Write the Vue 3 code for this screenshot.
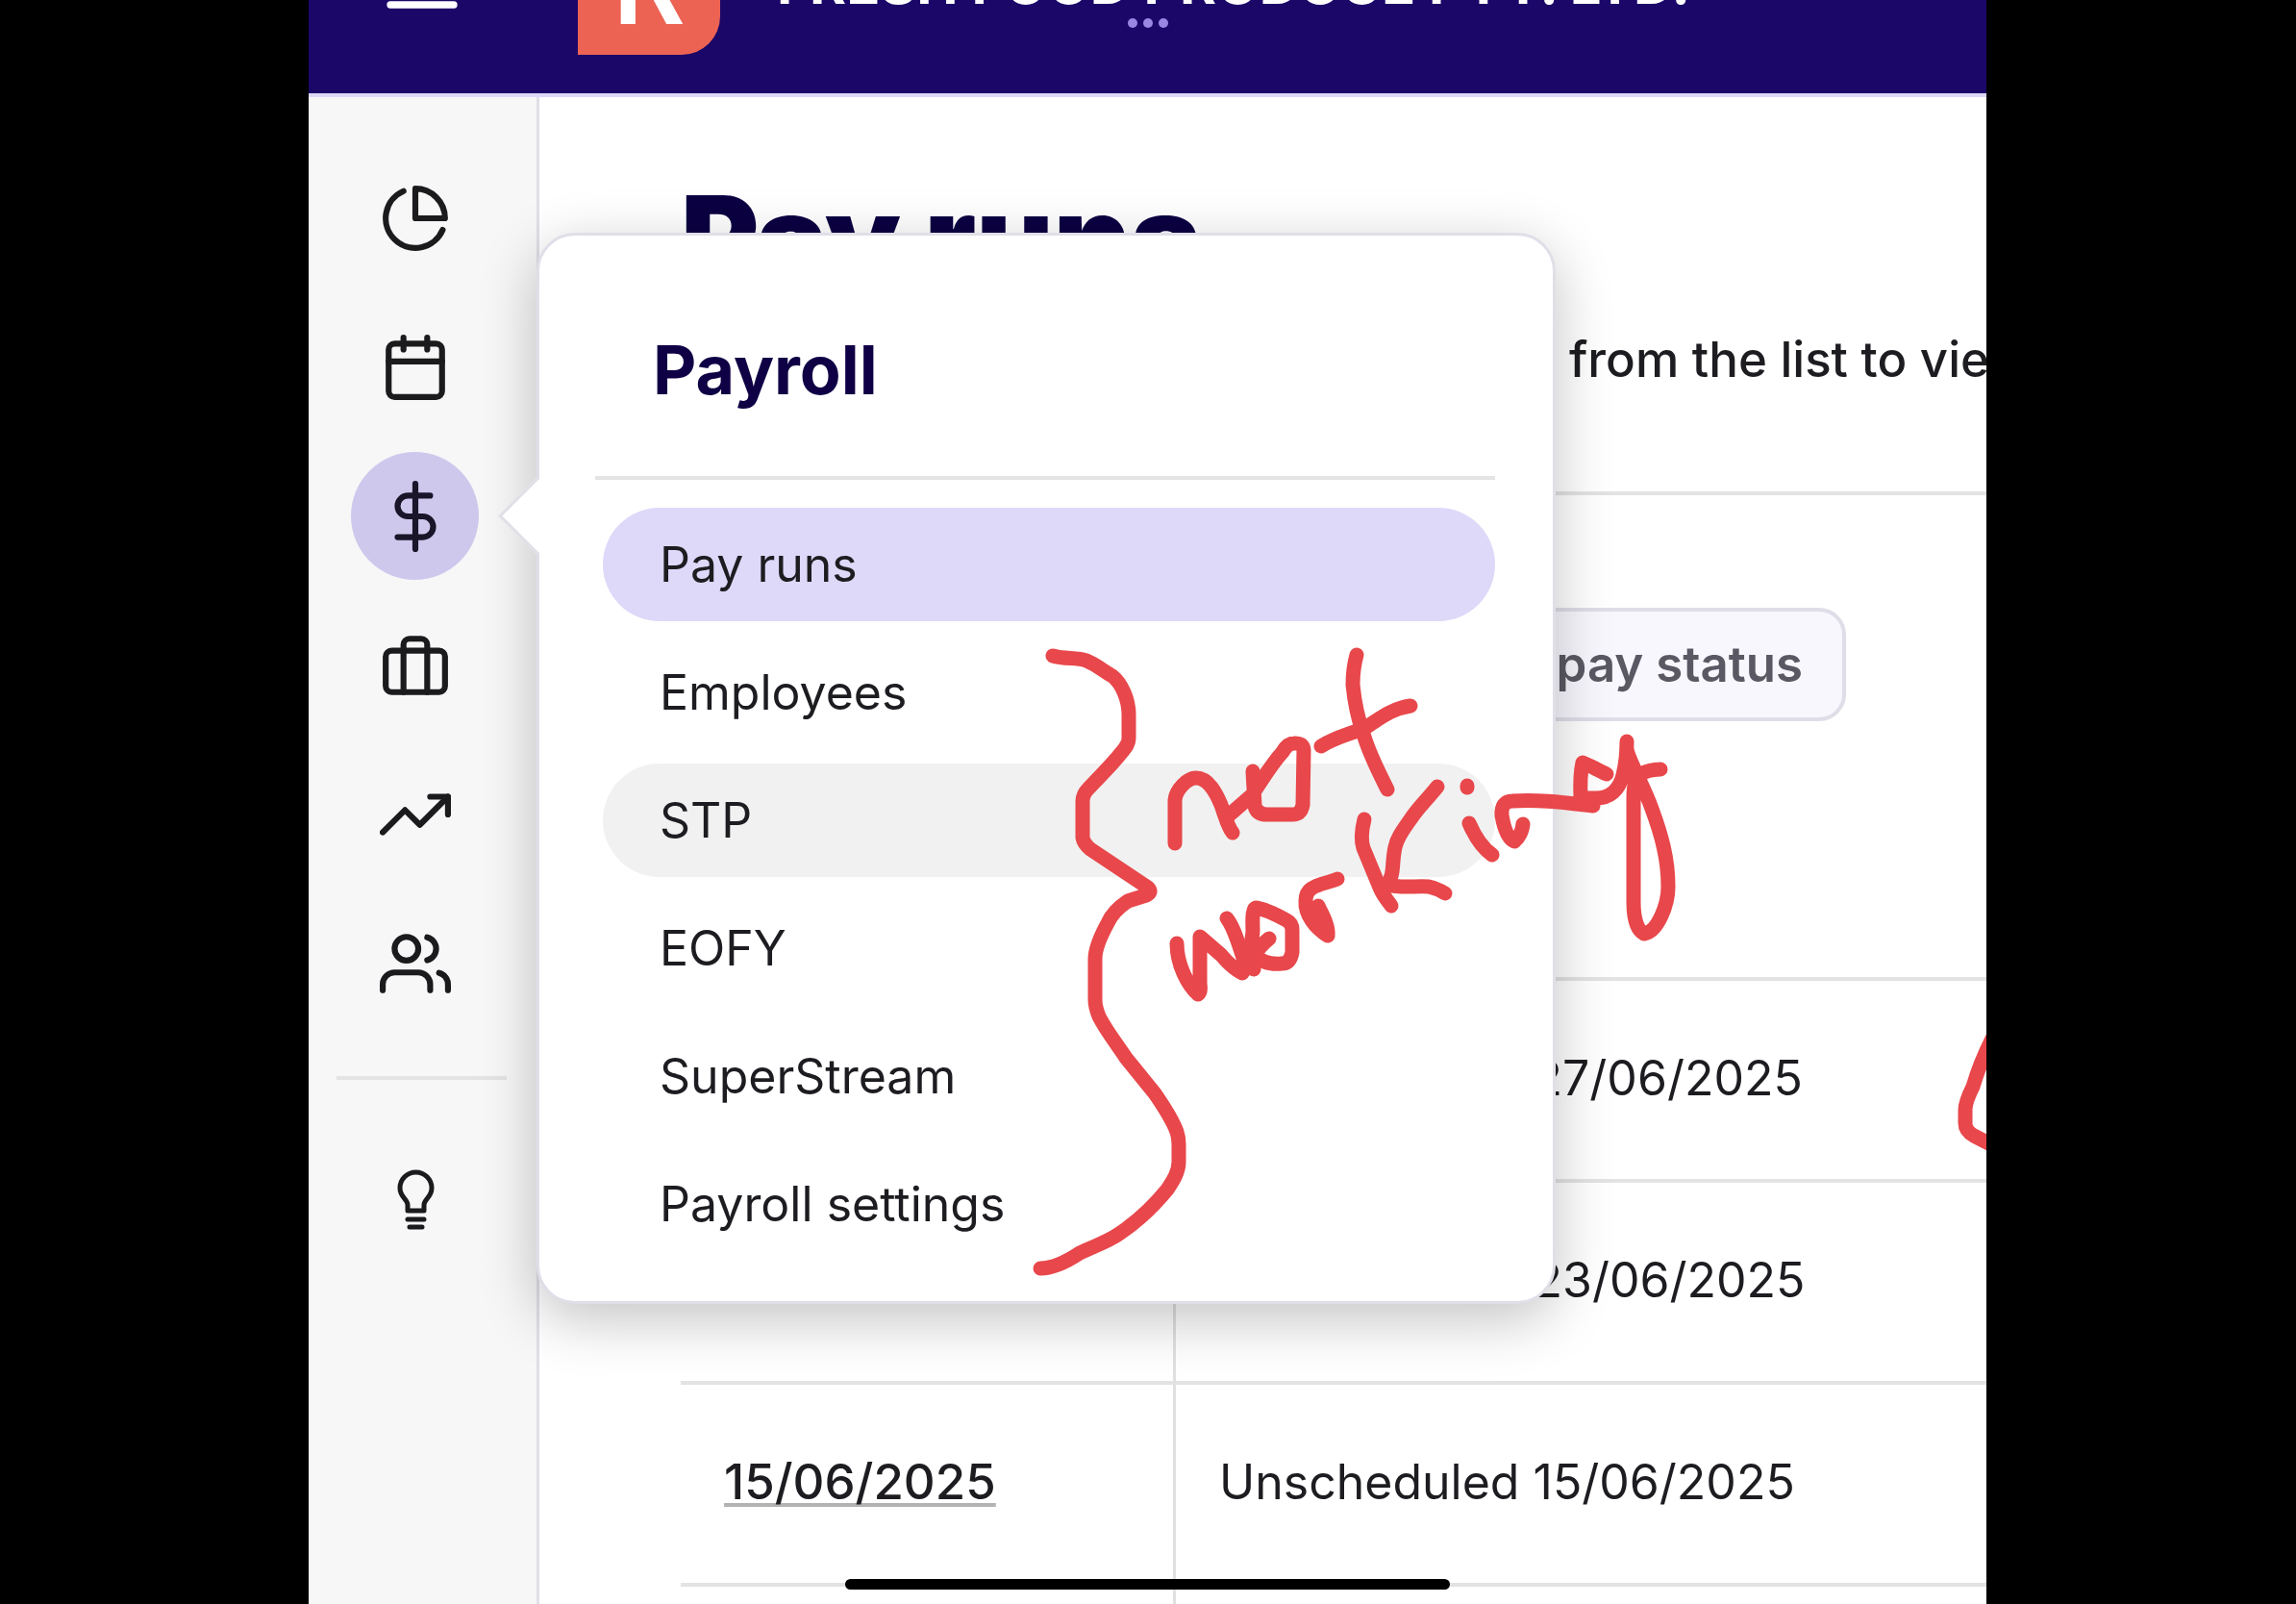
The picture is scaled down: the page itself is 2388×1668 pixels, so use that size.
<script setup>
import { ref } from 'vue'

const navItems = [
  { id: 'dashboard', label: 'Dashboard', paths: ['M21.21 15.89A10 10 0 1 1 8 2.83', 'M22 12A10 10 0 0 0 12 2v10z'] },
  { id: 'calendar', label: 'Calendar', paths: ['M5 4h14a2 2 0 0 1 2 2v14a2 2 0 0 1-2 2H5a2 2 0 0 1-2-2V6a2 2 0 0 1 2-2z', 'M16 2v4', 'M8 2v4', 'M3 10h18'] },
  { id: 'payroll', label: 'Payroll', paths: ['M12 1v22', 'M17 5H9.5a3.5 3.5 0 0 0 0 7h5a3.5 3.5 0 0 1 0 7H6'] },
  { id: 'business', label: 'Business', paths: ['M4 7h16a2 2 0 0 1 2 2v10a2 2 0 0 1-2 2H4a2 2 0 0 1-2-2V9a2 2 0 0 1 2-2z', 'M16 21V5a2 2 0 0 0-2-2h-4a2 2 0 0 0-2 2v16'] },
  { id: 'reports', label: 'Reports', paths: ['M23 6l-9.5 9.5-5-5L1 18', 'M17 6h6v6'] },
  { id: 'contacts', label: 'Contacts', paths: ['M17 21v-2a4 4 0 0 0-4-4H5a4 4 0 0 0-4 4v2', 'M9 3a4 4 0 1 1 0 8a4 4 0 1 1 0-8z', 'M23 21v-2a4 4 0 0 0-3-3.87', 'M16 3.13a4 4 0 0 1 0 7.75'] },
]
const activeNav = ref('payroll')

const menu = ['Pay runs', 'Employees', 'STP', 'EOFY', 'SuperStream', 'Payroll settings']
const current = ref('Pay runs')
const hovered = ref('STP')

const payRuns = [
  { id: 1, date: '', name: 'Unscheduled 27/06/2025' },
  { id: 2, date: '', name: 'Unscheduled 23/06/2025' },
  { id: 3, date: '15/06/2025', name: 'Unscheduled 15/06/2025' },
  { id: 4, date: '', name: '' },
]

// pen strokes, in page coordinates
const strokes = [
  // brace
  'M1095 682C1108 686 1120 683 1130 687C1140 691 1148 698 1157 703C1167 711 1174 728 1174 743V768C1174 774 1170 778 1166 783C1155 797 1142 809 1132 820Q1126 826 1126 833V871Q1127 877 1134 883L1194 923Q1199 928 1192 931L1173 937C1164 943 1156 951 1152 960C1146 971 1139 985 1139 997V1040C1139 1047 1141 1052 1143 1057C1150 1071 1161 1085 1171 1100L1201 1137C1210 1150 1219 1163 1224 1177Q1226 1183 1226 1190V1208C1226 1219 1220 1228 1214 1237C1200 1254 1182 1271 1164 1283C1151 1292 1137 1296 1123 1303C1111 1311 1096 1319 1082 1319',
  // not
  'M1222 877V832C1223 821 1235 809 1244 809C1257 809 1265 825 1270 837C1274 848 1276 858 1282 866',
  'M1279 847L1302 827C1313 811 1322 795 1334 782Q1339 773 1346 773Q1355 772 1356 780L1355 837Q1353 847 1344 847H1318Q1307 847 1305 838L1303 802',
  'M1411 681C1408 692 1407 701 1407 712C1409 732 1414 752 1418 763C1424 784 1434 803 1443 821',
  'M1374 776C1389 766 1407 763 1421 756C1433 749 1446 737 1467 734',
  // working
  'M1224 981C1224 1003 1235 1024 1246 1034C1250 1031 1248 1026 1248 1022V974L1270 993Q1281 1006 1292 1012Q1297 1006 1292 993C1287 978 1283 964 1276 955',
  'M1304 1008C1296 992 1303 979 1303 967Q1302 945 1306 944C1315 945 1329 952 1338 957Q1344 960 1344 967V990Q1342 1002 1333 1002C1321 1003 1311 1000 1305 993Q1311 983 1320 976',
  'M1391 914C1382 918 1371 919 1364 924Q1358 928 1358 937C1357 951 1368 965 1381 973C1382 962 1375 951 1371 942',
  'M1419 852C1416 864 1415 873 1418 882L1435 923C1439 933 1444 937 1447 942',
  'M1495 818C1482 834 1475 840 1467 852C1460 862 1453 871 1451 881C1447 899 1451 910 1442 920C1457 924 1472 921 1486 922Q1495 924 1503 929',
  'M1526 817V819',
  'M1528 856C1534 870 1542 882 1552 889',
  'M1584 857Q1583 868 1575 875Q1566 871 1562 848Q1561 833 1573 833C1600 831 1630 835 1657 838',
  'M1671 805C1662 801 1654 796 1646 793Q1643 806 1644 830H1660C1674 830 1684 822 1688 806Q1692 790 1692 771',
  'M1727 800Q1705 801 1701 812Q1699 819 1699 830V938C1699 953 1702 967 1710 971C1724 969 1735 941 1735 922C1735 893 1728 868 1718 841C1710 818 1697 797 1692 780',
  // loop running off the right edge
  'M2072 1080C2063 1098 2057 1113 2052 1130Q2044 1146 2044 1154V1168Q2044 1176 2053 1181L2076 1193',
]
</script>

<template>
  <div class="device">
    <div class="screen">
      <header class="topbar">
        <button class="menu-btn" aria-label="Menu">
          <svg viewBox="0 0 24 24"><path d="M3 6h18M3 12h18M3 18h18" /></svg>
        </button>
        <span class="logo">R</span>
        <span class="company">FRESH FOOD PRODUCE PTY. LTD.</span>
      </header>

      <div class="body">
        <nav class="sidebar">
          <button
            v-for="n in navItems"
            :key="n.id"
            class="nav-btn"
            :class="{ active: n.id === activeNav }"
            :aria-label="n.label"
            @click="activeNav = n.id"
          >
            <svg viewBox="0 0 24 24"><path v-for="d in n.paths" :key="d" :d="d" /></svg>
          </button>
          <hr class="nav-rule" />
          <button class="nav-btn tips" aria-label="Tips">
            <svg viewBox="0 0 74 74">
              <path d="M29 48v-6c0-6-8-8-8-17.5a16.5 16.5 0 0 1 33 0c0 9.5-8 11.5-8 17.5v6z" />
              <path d="M29 57h17M31 65h13" />
            </svg>
          </button>
        </nav>

        <main class="content">
          <h1>Pay runs</h1>
          <p class="intro">from the list to view</p>
          <hr class="rule" />
          <button class="filter">pay status</button>
          <table class="runs">
            <tbody>
              <tr v-for="r in payRuns" :key="r.id">
                <td class="date"><a v-if="r.date" href="#">{{ r.date }}</a></td>
                <td>{{ r.name }}</td>
              </tr>
            </tbody>
          </table>
        </main>

        <section class="flyout">
          <h2>Payroll</h2>
          <ul>
            <li v-for="m in menu" :key="m">
              <a
                href="#"
                :class="{ current: m === current, hovered: m === hovered }"
                @click.prevent="current = m"
              >{{ m }}</a>
            </li>
          </ul>
        </section>
      </div>

      <div class="dots"><i></i><i></i><i></i></div>
      <svg class="ink" viewBox="321 0 1745 1668" preserveAspectRatio="xMinYMin meet" aria-label="not working">
        <path v-for="s in strokes" :key="s" :d="s" />
      </svg>
      <div class="home-bar"></div>
    </div>
  </div>
</template>

<style>
body {
  margin: 0;
  background: #000;
}
</style>

<style scoped>
.device {
  padding: 0 322px 0 321px;
  background: #000;
  font-family: Inter, 'Liberation Sans', sans-serif;
  font-size: 50px;
  line-height: 60px;
  color: #1d1d21;
}
.screen {
  position: relative;
  height: 100vh;
  display: flex;
  flex-direction: column;
  overflow: hidden;
  background: #fff;
}
button {
  font: inherit;
  border: 0;
  cursor: pointer;
}
svg {
  fill: none;
  stroke: currentColor;
  stroke-width: 2;
  stroke-linecap: round;
  stroke-linejoin: round;
}

/* scrolled partly out of view */
.topbar {
  flex: none;
  display: flex;
  align-items: center;
  height: 228px;
  margin-top: -131px;
  padding-left: 74px;
  background: #1b0768;
  border-bottom: 4px solid #dcd8f6;
  color: #fff;
}
.menu-btn {
  padding: 0;
  background: none;
  color: #fff;
}
.menu-btn svg {
  display: block;
  width: 88px;
  height: 88px;
}
.logo {
  display: flex;
  align-items: center;
  justify-content: center;
  width: 148px;
  height: 148px;
  margin: 0 59px 0 118px;
  border-radius: 40px 0 40px 0;
  background: #ec6354;
  font-size: 116px;
  font-weight: 600;
}
.company {
  font-size: 58px;
  font-weight: 700;
  white-space: nowrap;
}

.body {
  position: relative;
  flex: 1;
  display: flex;
  min-height: 0;
}
.sidebar {
  flex: none;
  box-sizing: border-box;
  width: 240px;
  padding-top: 59px;
  display: flex;
  flex-direction: column;
  gap: 22px;
  background: #f7f7f7;
  border-right: 3px solid #e0dfe8;
}
.nav-btn {
  display: flex;
  align-items: center;
  justify-content: center;
  width: 133px;
  height: 133px;
  margin-left: 44px;
  padding: 0;
  border-radius: 50%;
  background: none;
  color: #1b1b1e;
}
.nav-btn svg {
  width: 74px;
  height: 74px;
}
.nav-btn.active {
  background: #cfc8ed;
  color: #1a1528;
}
.nav-rule {
  width: 177px;
  height: 4px;
  margin: 29px 0 36px 29px;
  border: 0;
  background: #e4e4e4;
}
.tips svg {
  stroke-width: 5;
}

.content {
  flex: 1;
  min-width: 0;
  overflow: hidden;
  padding: 87px 0 0 147px;
}
h1 {
  margin: 0;
  font-size: 124px;
  line-height: 120px;
  font-weight: 900;
  color: #0b0042;
}
.intro {
  margin: 36px 0 107px;
  padding-left: 924px;
  font-size: 51px;
  font-weight: 500;
  white-space: nowrap;
}
.rule {
  height: 4px;
  margin: 0;
  border: 0;
  background: #e3e3e3;
}
.filter {
  display: block;
  box-sizing: border-box;
  width: 612px;
  height: 118px;
  margin: 117px 0 266px 600px;
  padding: 0 41px;
  border: 4px solid #dfdee8;
  border-radius: 28px;
  background: #f8f7fe;
  color: #5a5862;
  font-size: 51px;
  font-weight: 600;
  text-align: right;
}
.runs {
  width: 100%;
  border-collapse: separate;
  border-spacing: 0;
  border-top: 4px solid #e3e3e3;
  table-layout: fixed;
}
.runs td {
  box-sizing: border-box;
  height: 210px;
  padding: 0 45px 4px;
  border-bottom: 4px solid #e3e3e3;
  white-space: nowrap;
}
.runs .date {
  width: 515px;
  border-right: 3px solid #e0e0e3;
  font-size: 51px;
  font-weight: 500;
}
.date a {
  color: inherit;
  text-decoration-color: #b3b3b3;
  text-decoration-thickness: 4px;
  text-underline-offset: 4px;
}

.flyout {
  position: absolute;
  left: 237px;
  top: 141px;
  box-sizing: border-box;
  width: 1060px;
  padding: 90px 60px 42px 58px;
  border: 3px solid #e0dfe8;
  border-radius: 40px;
  background: #fff;
  box-shadow: 0 16px 60px rgba(0, 0, 0, 0.24);
}
.flyout::before {
  content: '';
  position: absolute;
  left: -31px;
  top: 263px;
  width: 54px;
  height: 54px;
  border-left: 3px solid #e0dfe8;
  border-bottom: 3px solid #e0dfe8;
  background: #fff;
  transform: rotate(45deg);
}
h2 {
  margin: 0 0 29px;
  padding: 0 0 60px 60px;
  border-bottom: 4px solid #e4e4e4;
  font-size: 70px;
  line-height: 100px;
  font-weight: 700;
  color: #0f0045;
}
.flyout ul {
  display: flex;
  flex-direction: column;
  gap: 15px;
  margin: 0;
  padding: 0 0 0 8px;
  list-style: none;
}
.flyout a {
  display: block;
  padding: 29px 59px;
  border-radius: 59px;
  color: #1d1d21;
  text-decoration: none;
}
.flyout a.current {
  background: #ded8f9;
}
.flyout a.hovered {
  background: #f1f1f1;
}

.dots {
  position: absolute;
  top: 19px;
  left: 0;
  right: 0;
  display: flex;
  justify-content: center;
  gap: 6px;
}
.dots i {
  width: 10px;
  height: 10px;
  border-radius: 50%;
  background: #9a86e3;
}
.ink {
  position: absolute;
  left: 0;
  top: 0;
  width: 100%;
  color: #e8474b;
  stroke-width: 15;
  pointer-events: none;
}
.home-bar {
  position: absolute;
  left: 32%;
  right: 32%;
  bottom: 15px;
  height: 11px;
  border-radius: 6px;
  background: #000;
}
</style>
